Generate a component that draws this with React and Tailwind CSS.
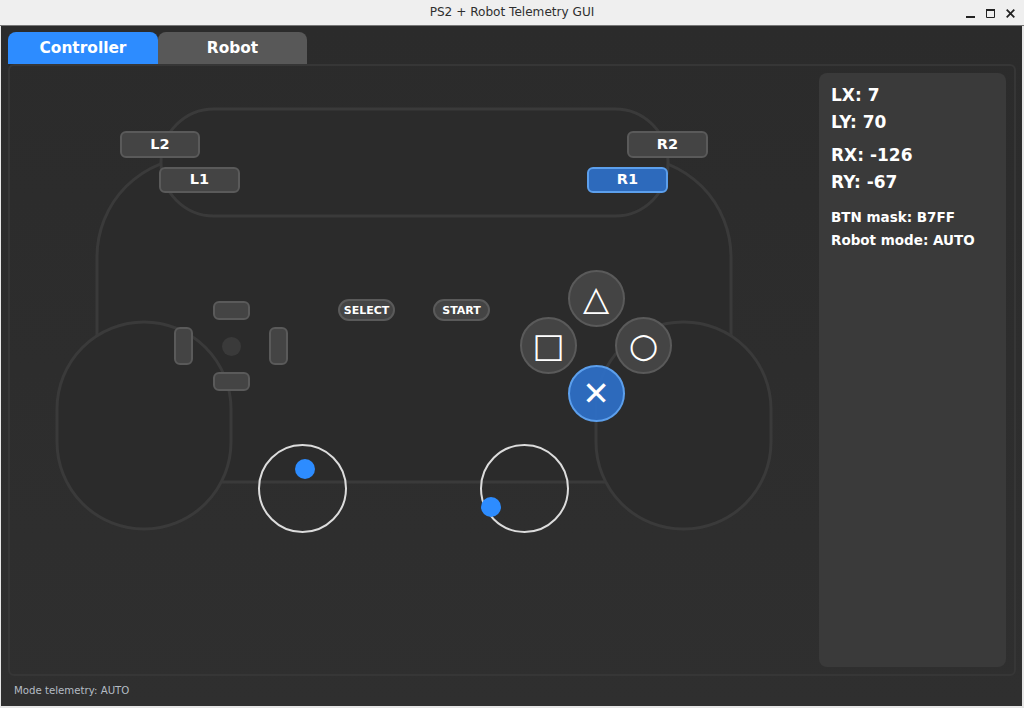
import React from 'react';

const FONT = 'font-["DejaVu_Sans",sans-serif]';

function PadButton({ className, children }) {
  return (
    <div className={`flex items-center justify-center border-2 text-white font-bold ${className}`}>
      {children}
    </div>
  );
}

function Stick({ className, dotClass }) {
  return (
    <div className={`absolute w-[89px] h-[89px] rounded-full border-2 border-[#dcdcdc] ${className}`}>
      <div className={`absolute w-[20px] h-[20px] rounded-full bg-[#2d8cff] ${dotClass}`} />
    </div>
  );
}

function DPad() {
  const flat = 'w-[37px] h-[19px] rounded-md bg-[#444444] border-[#5a5a5a]';
  const tall = 'w-[19px] h-[38px] rounded-md bg-[#444444] border-[#5a5a5a]';
  return (
    <div className="absolute left-[157px] top-[228px] w-[114px] flex flex-col items-center gap-[7px]">
      <PadButton className={flat} />
      <div className="w-full flex items-center justify-between">
        <PadButton className={tall} />
        <div className="w-[19px] h-[19px] rounded-full bg-[#3a3a3a]" />
        <PadButton className={tall} />
      </div>
      <PadButton className={flat} />
    </div>
  );
}

function FaceButtons() {
  const round = 'w-[57px] h-[57px] rounded-full bg-[#444444] border-[#5a5a5a] text-[34px] font-normal';
  return (
    <div className="absolute left-[503px] top-[197px] w-[152px] flex flex-col items-center">
      <PadButton className={round}>△</PadButton>
      <div className="w-full flex justify-between -mt-[10px]">
        <PadButton className={round}>□</PadButton>
        <PadButton className={round}>○</PadButton>
      </div>
      <PadButton className="-mt-[9px] w-[57px] h-[57px] rounded-full bg-[#2d6ec4]/95 border-[#5c9fec] text-[33px]">✕</PadButton>
    </div>
  );
}

function ControllerCanvas() {
  return (
    <div className="relative flex-1">
      <svg className="absolute left-0 top-0" width="802" height="592" fill="#2b2b2b" stroke="#3a3a3a" strokeWidth="3">
        <rect x="80" y="84" width="634" height="325" rx="100" />
        <rect x="144" y="36" width="507" height="107" rx="53" />
        <rect x="40" y="249" width="174" height="207" rx="87" />
        <rect x="579" y="249" width="175" height="207" rx="87" />
      </svg>

      <PadButton className="absolute left-[103px] top-[58px] w-[80px] h-[27px] rounded-md bg-[#444444] border-[#5a5a5a] text-[14.5px]">L2</PadButton>
      <PadButton className="absolute left-[142px] top-[94px] w-[81px] h-[26px] rounded-md bg-[#444444] border-[#5a5a5a] text-[14.5px]">L1</PadButton>
      <PadButton className="absolute left-[610px] top-[58px] w-[81px] h-[27px] rounded-md bg-[#444444] border-[#5a5a5a] text-[14.5px]">R2</PadButton>
      <PadButton className="absolute left-[570px] top-[94px] w-[81px] h-[26px] rounded-md bg-[#2d6ec4]/95 border-[#5c9fec] text-[14.5px]">R1</PadButton>

      <DPad />

      <div className="absolute left-[321px] top-[226px] flex gap-[38px]">
        <PadButton className="w-[57px] h-[22px] pt-[2px] rounded-full bg-[#444444] border-[#5a5a5a] text-[11px]">SELECT</PadButton>
        <PadButton className="w-[57px] h-[22px] pt-[2px] rounded-full bg-[#444444] border-[#5a5a5a] text-[11px]">START</PadButton>
      </div>

      <FaceButtons />

      <Stick className="left-[241px] top-[371px]" dotClass="left-[35px] top-[13px]" />
      <Stick className="left-[463px] top-[371px]" dotClass="left-[-1px] top-[51px]" />
    </div>
  );
}

function SidePanel() {
  return (
    <div className="w-[187px] shrink-0 rounded-lg bg-[#3a3a3a] px-3 pt-[11px] text-white font-bold">
      <p className="text-[17px] leading-[22px]">LX: 7</p>
      <p className="text-[17px] leading-[22px] mt-[5px]">LY: 70</p>
      <p className="text-[17px] leading-[22px] mt-[11px]">RX: -126</p>
      <p className="text-[17px] leading-[22px] mt-[5px]">RY: -67</p>
      <p className="text-[13.5px] leading-[18px] mt-[15px]">BTN mask: B7FF</p>
      <p className="text-[13.5px] leading-[18px] mt-[5px]">Robot mode: AUTO</p>
    </div>
  );
}

export default function App() {
  return (
    <div className={`w-[1024px] h-[708px] flex flex-col overflow-hidden bg-[#e6e6e6] ${FONT}`}>
      <div className="relative h-[26px] shrink-0 flex items-center justify-center bg-[#efefef] border-b border-[#777777] text-[12.1px] text-[#2e2e2e]">
        PS2 + Robot Telemetry GUI
        <div className="absolute right-[9px] top-[9px] flex items-start gap-[11px] text-[#222222]">
          <svg width="9" height="9" viewBox="0 0 9 9"><rect x="0" y="7" width="9" height="2" fill="currentColor" /></svg>
          <svg width="9" height="9" viewBox="0 0 9 9" fill="none" stroke="currentColor"><path d="M.5 1.5h8v7h-8z" /><path d="M0 1h9" strokeWidth="2" /></svg>
          <svg width="9" height="9" viewBox="0 0 9 9" stroke="currentColor" strokeWidth="1.8"><path d="M.7.7l7.6 7.6M8.3.7L.7 8.3" /></svg>
        </div>
      </div>

      <div className="flex-1 flex flex-col ml-px mr-[2px] mb-[2px] bg-gradient-to-b from-[#2b2b2b] to-[#2f2f2f] min-h-0">
        <div className="flex pl-[7px] pt-[6px] shrink-0 h-[38px]">
          <div className="w-[150px] pt-px rounded-t-lg bg-[#2d8cff] flex items-center justify-center text-white font-bold text-[15.4px]">Controller</div>
          <div className="w-[149px] pt-px rounded-t-lg bg-[#585858] flex items-center justify-center text-white font-bold text-[15.4px]">Robot</div>
        </div>
        <div className="ml-[7px] w-[1008px] h-[612px] shrink-0 flex border-2 border-[#363636] rounded-md pl-[7px] pr-[8px] py-[7px]">
          <ControllerCanvas />
          <SidePanel />
        </div>
        <div className="flex-1 flex items-center px-[13px] text-[10.2px] text-[#b4bcc4]">Mode telemetry: AUTO</div>
      </div>
    </div>
  );
}
